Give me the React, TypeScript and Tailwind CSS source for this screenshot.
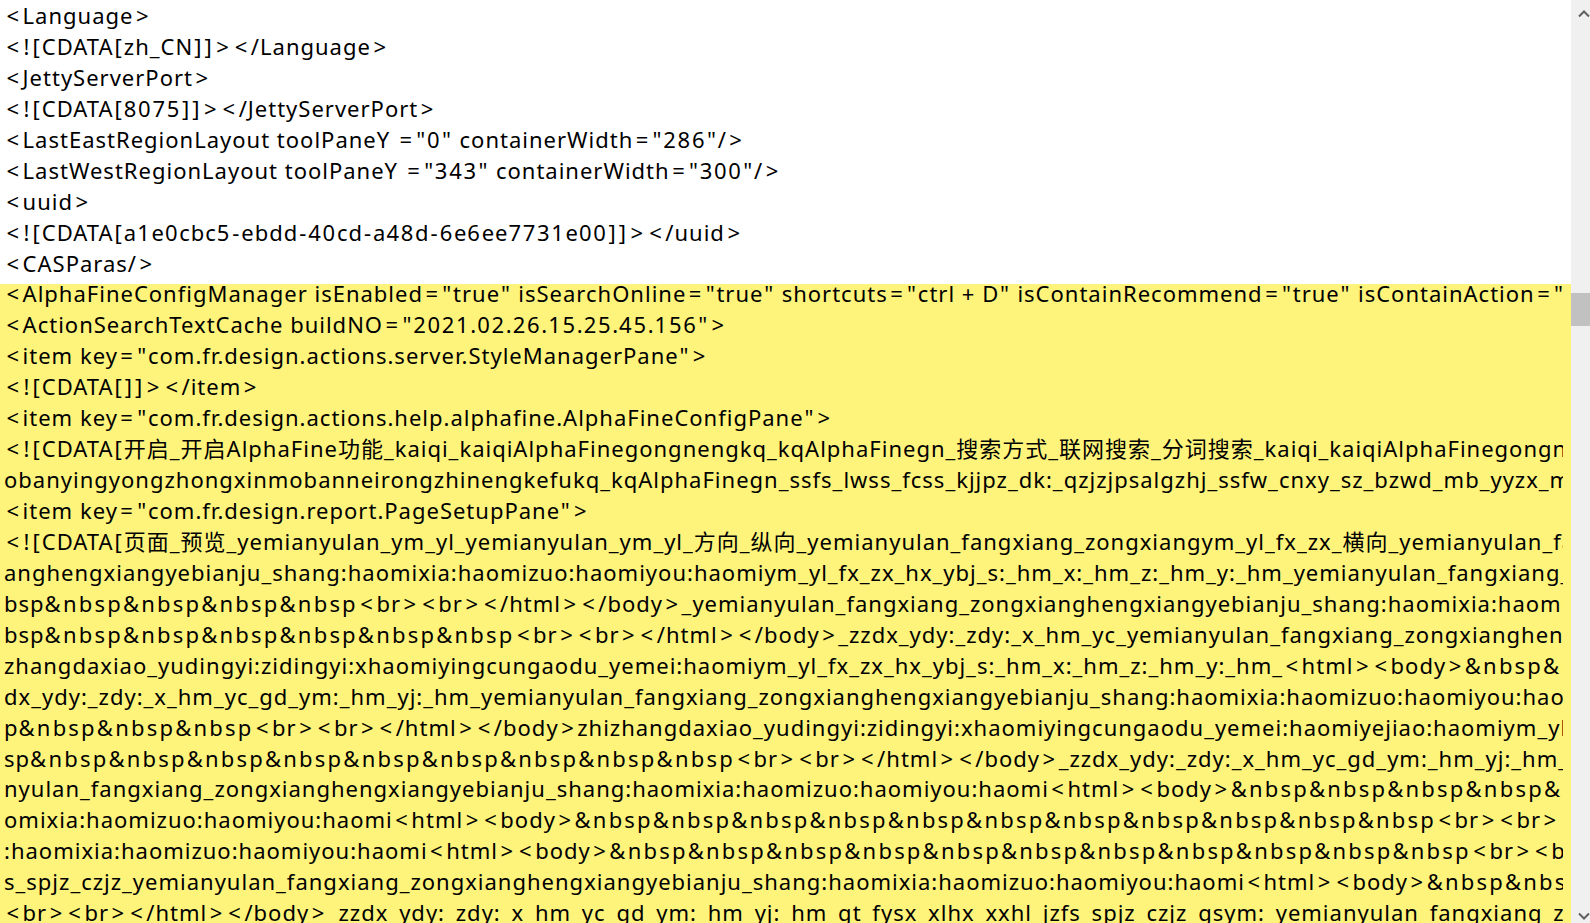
import React from "react";

const plainLines = [
  "<Language>",
  "<![CDATA[zh_CN]]></Language>",
  "<JettyServerPort>",
  "<![CDATA[8075]]></JettyServerPort>",
  '<LastEastRegionLayout toolPaneY ="0" containerWidth="286"/>',
  '<LastWestRegionLayout toolPaneY ="343" containerWidth="300"/>',
  "<uuid>",
  "<![CDATA[a1e0cbc5-ebdd-40cd-a48d-6e6ee7731e00]]></uuid>",
  "<CASParas/>",
];

const markedLines = [
  '<AlphaFineConfigManager isEnabled="true" isSearchOnline="true" shortcuts="ctrl + D" isContainRecommend="true" isContainAction="true" isContainDocument="true">',
  '<ActionSearchTextCache buildNO="2021.02.26.15.25.45.156">',
  '<item key="com.fr.design.actions.server.StyleManagerPane">',
  "<![CDATA[]]></item>",
  '<item key="com.fr.design.actions.help.alphafine.AlphaFineConfigPane">',
  "<![CDATA[开启_开启AlphaFine功能_kaiqi_kaiqiAlphaFinegongnengkq_kqAlphaFinegn_搜索方式_联网搜索_分词搜索_kaiqi_kaiqiAlphaFinegongnengsousuofangshi_lianwangsousuo",
  "obanyingyongzhongxinmobanneirongzhinengkefukq_kqAlphaFinegn_ssfs_lwss_fcss_kjjpz_dk:_qzjzjpsalgzhj_ssfw_cnxy_sz_bzwd_mb_yyzx_mbnr_znkf",
  '<item key="com.fr.design.report.PageSetupPane">',
  "<![CDATA[页面_预览_yemianyulan_ym_yl_yemianyulan_ym_yl_方向_纵向_yemianyulan_fangxiang_zongxiangym_yl_fx_zx_横向_yemianyulan_fangxiang_hengxiang",
  "anghengxiangyebianju_shang:haomixia:haomizuo:haomiyou:haomiym_yl_fx_zx_hx_ybj_s:_hm_x:_hm_z:_hm_y:_hm_yemianyulan_fangxiang_zongxiang",
  "bsp&nbsp&nbsp&nbsp&nbsp<br><br></html></body>_yemianyulan_fangxiang_zongxianghengxiangyebianju_shang:haomixia:haomizuo:haomiyou",
  "bsp&nbsp&nbsp&nbsp&nbsp&nbsp&nbsp<br><br></html></body>_zzdx_ydy:_zdy:_x_hm_yc_yemianyulan_fangxiang_zongxianghengxiangyebianju",
  "zhangdaxiao_yudingyi:zidingyi:xhaomiyingcungaodu_yemei:haomiym_yl_fx_zx_hx_ybj_s:_hm_x:_hm_z:_hm_y:_hm_<html><body>&nbsp&nbsp&nbsp",
  "dx_ydy:_zdy:_x_hm_yc_gd_ym:_hm_yj:_hm_yemianyulan_fangxiang_zongxianghengxiangyebianju_shang:haomixia:haomizuo:haomiyou:haomi",
  "p&nbsp&nbsp&nbsp<br><br></html></body>zhizhangdaxiao_yudingyi:zidingyi:xhaomiyingcungaodu_yemei:haomiyejiao:haomiym_yl_fx",
  "sp&nbsp&nbsp&nbsp&nbsp&nbsp&nbsp&nbsp&nbsp&nbsp<br><br></html></body>_zzdx_ydy:_zdy:_x_hm_yc_gd_ym:_hm_yj:_hm_gt_fysx",
  "nyulan_fangxiang_zongxianghengxiangyebianju_shang:haomixia:haomizuo:haomiyou:haomi<html><body>&nbsp&nbsp&nbsp&nbsp&nbsp&nbsp",
  "omixia:haomizuo:haomiyou:haomi<html><body>&nbsp&nbsp&nbsp&nbsp&nbsp&nbsp&nbsp&nbsp&nbsp&nbsp&nbsp<br><br></html></body>",
  ":haomixia:haomizuo:haomiyou:haomi<html><body>&nbsp&nbsp&nbsp&nbsp&nbsp&nbsp&nbsp&nbsp&nbsp&nbsp&nbsp<br><br></html></body>",
  "s_spjz_czjz_yemianyulan_fangxiang_zongxianghengxiangyebianju_shang:haomixia:haomizuo:haomiyou:haomi<html><body>&nbsp&nbsp&nbsp",
  "<br><br></html></body>_zzdx_ydy:_zdy:_x_hm_yc_gd_ym:_hm_yj:_hm_gt_fysx_xlhx_xxhl_jzfs_spjz_czjz_gsym:_yemianyulan_fangxiang_zongxiang",
];

// YaHei sets some glyphs wider than Noto Sans does, so pad those out
function wide(text: string) {
  return text.split(/(&nbsp|[<>=]|[[\]!"-]|[0-9]+)/).map((part, i) => {
    if (part === "<" || part === ">" || part === "=") {
      return (
        <span key={i} className="px-[2.5px]">
          {part}
        </span>
      );
    }
    if (part === "&nbsp") {
      return (
        <span key={i} className="tracking-[2.2px]">
          {part}
        </span>
      );
    }
    if (part === "[" || part === "]" || part === "!" || part === "-") {
      return (
        <span key={i} className="px-[1px]">
          {part}
        </span>
      );
    }
    if (part === '"') {
      return (
        <span key={i} className="px-[0.75px]">
          {part}
        </span>
      );
    }
    if (/^[0-9]+$/.test(part)) {
      return (
        <span key={i} className="tracking-[1.7px]">
          {part}
        </span>
      );
    }
    return part;
  });
}

function Line({ text }: { text: string }) {
  return (
    <div className="h-[30.95px] pl-[4px] pr-[8px]">
      <div className="overflow-hidden whitespace-nowrap leading-[30.95px]">{wide(text)}</div>
    </div>
  );
}

function Chevron({ down }: { down?: boolean }) {
  return (
    <svg width="12" height="8" viewBox="0 0 12 8" className="ml-[7px]">
      <path
        d={down ? "M1 1.5 L6 6.5 L11 1.5" : "M1 6.5 L6 1.5 L11 6.5"}
        fill="none"
        stroke="#606060"
        strokeWidth="2"
      />
    </svg>
  );
}

export default function App() {
  return (
    <div className="flex h-[923px] w-[1590px] overflow-hidden bg-white font-['Noto_Sans','Noto_Sans_CJK_SC',sans-serif] text-[22px] tracking-[1px] text-black">
      <div className="w-[1571px] shrink-0">
        {plainLines.map((line, i) => (
          <Line key={i} text={line} />
        ))}
        <div className="bg-[linear-gradient(to_bottom,transparent_6px,#fef47c_6px)]">
          {markedLines.map((line, i) => (
            <Line key={i} text={line} />
          ))}
        </div>
      </div>

      <div className="flex w-[19px] flex-col bg-[#f0f0f0]">
        <div className="pt-[10px]">
          <Chevron />
        </div>
        <div className="mt-[275px] h-[33px] bg-[#c1c1c1]" />
        <div className="flex-1" />
        <div className="pb-[3px]">
          <Chevron down />
        </div>
      </div>
    </div>
  );
}
